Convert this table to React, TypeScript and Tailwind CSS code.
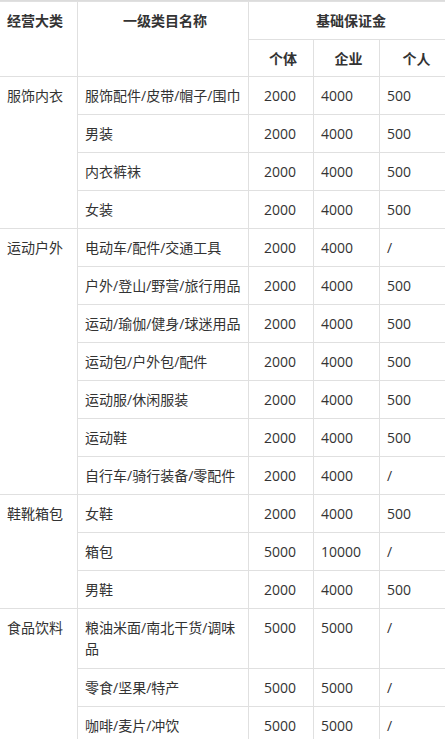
import React from "react";

type Row = { name: string; a: string; b: string; c: string; h?: number };
type Group = { cat: string; rows: Row[] };

const groups: Group[] = [
  {
    cat: "服饰内衣",
    rows: [
      { name: "服饰配件/皮带/帽子/围巾", a: "2000", b: "4000", c: "500" },
      { name: "男装", a: "2000", b: "4000", c: "500" },
      { name: "内衣裤袜", a: "2000", b: "4000", c: "500" },
      { name: "女装", a: "2000", b: "4000", c: "500" },
    ],
  },
  {
    cat: "运动户外",
    rows: [
      { name: "电动车/配件/交通工具", a: "2000", b: "4000", c: "/" },
      { name: "户外/登山/野营/旅行用品", a: "2000", b: "4000", c: "500" },
      { name: "运动/瑜伽/健身/球迷用品", a: "2000", b: "4000", c: "500" },
      { name: "运动包/户外包/配件", a: "2000", b: "4000", c: "500" },
      { name: "运动服/休闲服装", a: "2000", b: "4000", c: "500" },
      { name: "运动鞋", a: "2000", b: "4000", c: "500" },
      { name: "自行车/骑行装备/零配件", a: "2000", b: "4000", c: "/" },
    ],
  },
  {
    cat: "鞋靴箱包",
    rows: [
      { name: "女鞋", a: "2000", b: "4000", c: "500" },
      { name: "箱包", a: "5000", b: "10000", c: "/" },
      { name: "男鞋", a: "2000", b: "4000", c: "500" },
    ],
  },
  {
    cat: "食品饮料",
    rows: [
      { name: "粮油米面/南北干货/调味品", a: "5000", b: "5000", c: "/", h: 60 },
      { name: "零食/坚果/特产", a: "5000", b: "5000", c: "/" },
      { name: "咖啡/麦片/冲饮", a: "5000", b: "5000", c: "/" },
    ],
  },
];

const cell = "border border-[#e0e0e0] align-top pl-[7px] pr-[3px] pt-[8px] pb-0";

export default function App() {
  return (
    <div
      className="w-[445px] h-[739px] overflow-hidden bg-white text-[#333] text-[14px] leading-[21px]"
      style={{ fontFamily: '"Open Sans","Noto Sans CJK SC",sans-serif' }}
    >
      <div className="h-[2px] bg-[#dcdcdc]" />
      <table className="table-fixed border-collapse w-[450px] -ml-px -mt-px">
        <colgroup>
          <col className="w-[78px]" />
          <col className="w-[171px]" />
          <col className="w-[65px]" />
          <col className="w-[66px]" />
          <col className="w-[70px]" />
        </colgroup>
        <thead>
          <tr className="h-[38px]">
            <th rowSpan={2} className={`${cell} text-left font-bold`}>经营大类</th>
            <th rowSpan={2} className={`${cell} text-center font-bold`}>一级类目名称</th>
            <th colSpan={3} className={`${cell} text-center font-bold`}>基础保证金</th>
          </tr>
          <tr className="h-[37px]">
            <th className={`${cell} text-center font-bold`}>个体</th>
            <th className={`${cell} text-center font-bold`}>企业</th>
            <th className={`${cell} text-center font-bold`}>个人</th>
          </tr>
        </thead>
        <tbody>
          {groups.map((g) =>
            g.rows.map((r, i) => (
              <tr key={g.cat + i} className={r.h ? "h-[60px]" : "h-[38px]"}>
                {i === 0 && (
                  <td rowSpan={g.rows.length} className={cell}>
                    {g.cat}
                  </td>
                )}
                <td className={cell}>{r.name}</td>
                <td className={`${cell} pl-[15px]`}>{r.a}</td>
                <td className={cell}>{r.b}</td>
                <td className={cell}>{r.c}</td>
              </tr>
            ))
          )}
        </tbody>
      </table>
    </div>
  );
}
